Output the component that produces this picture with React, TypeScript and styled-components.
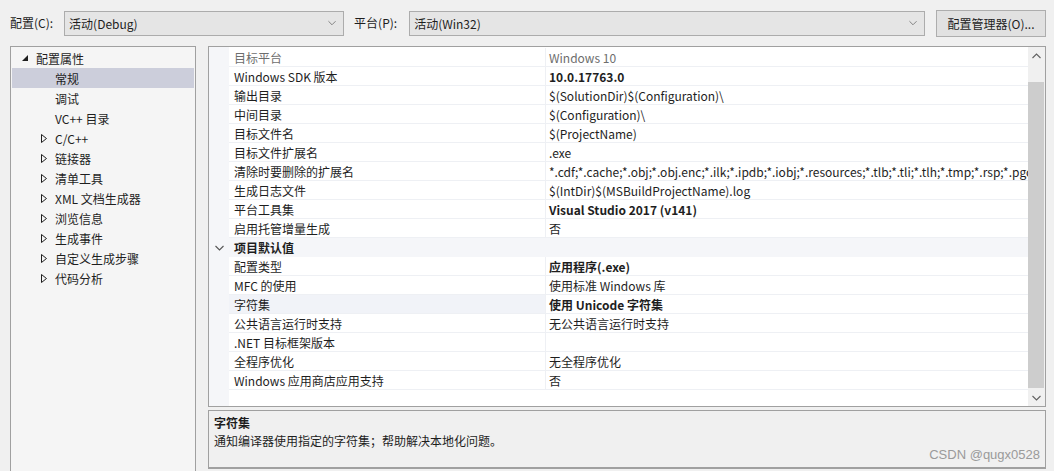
import React from "react";
import styled, { createGlobalStyle } from "styled-components";

const FONT = `"Segoe UI", "Noto Sans CJK SC", "Noto Sans", sans-serif`;

const Global = createGlobalStyle`
  html, body { margin: 0; padding: 0; background: #f0f0f0; }
  body { font-family: ${FONT}; font-size: 12px; color: #1e1e1e; }
  * { box-sizing: border-box; }
`;

const Window = styled.div`
  width: 1054px;
  height: 471px;
  display: flex;
  flex-direction: column;
  overflow: hidden;
  background: #f0f0f0;
  position: relative;
`;

const Toolbar = styled.div`
  height: 46px;
  display: flex;
  align-items: center;
  padding: 0 8px 0 10px;
  flex-shrink: 0;
`;

const Label = styled.span<{ $gap: number }>`
  margin-right: ${(p) => p.$gap}px;
  white-space: nowrap;
  line-height: 16px;
`;

const Combo = styled.div<{ $width?: number }>`
  ${(p) => (p.$width ? `width: ${p.$width}px; flex-shrink: 0;` : "flex: 1;")}
  height: 25px;
  border: 1px solid #acacac;
  background: #e5e5e5;
  display: flex;
  align-items: center;
  padding: 0 7px 0 4px;
  margin-right: 10px;
`;

const ComboText = styled.span`
  flex: 1;
  white-space: nowrap;
`;

const Button = styled.div`
  width: 110px;
  height: 27px;
  flex-shrink: 0;
  border: 1px solid #adadad;
  background: #e1e1e1;
  display: flex;
  align-items: center;
  justify-content: center;
  margin-left: 1px;
`;

const Main = styled.div`
  flex: 1;
  display: flex;
  padding-left: 10px;
  padding-right: 8px;
  gap: 12px;
  min-height: 0;
`;

const TreePanel = styled.div`
  width: 186px;
  flex-shrink: 0;
  height: 440px;
  border: 1px solid #a0a0a0;
  background: #f5f5f5;
  padding: 1px 1px 0 1px;
`;

const TreeRow = styled.div<{ $indent: number; $selected?: boolean }>`
  height: 20px;
  display: flex;
  align-items: center;
  padding-left: ${(p) => p.$indent}px;
  background: ${(p) => (p.$selected ? "#cccedb" : "transparent")};
  white-space: nowrap;
`;

const Twist = styled.span`
  width: 14px;
  display: inline-flex;
  align-items: center;
  flex-shrink: 0;
`;

const RightCol = styled.div`
  flex: 1;
  display: flex;
  flex-direction: column;
  gap: 3px;
  min-width: 0;
`;

const Grid = styled.div`
  height: 361px;
  flex-shrink: 0;
  border: 1px solid #a0a0a0;
  background: #ffffff;
  display: flex;
  overflow: hidden;
`;

const GridBody = styled.div`
  flex: 1;
  min-width: 0;
  padding-top: 1px;
  display: flex;
  flex-direction: column;
  background: linear-gradient(to right, #f5f6f9 20px, #ffffff 20px);
`;

const PropRow = styled.div`
  display: flex;
  height: 19px;
`;

const Gutter = styled.div`
  width: 20px;
  flex-shrink: 0;
  background: #f5f6f9;
  display: flex;
  align-items: center;
  justify-content: center;
`;

const NameCell = styled.div<{ $selected?: boolean; $dim?: boolean }>`
  width: 316px;
  flex-shrink: 0;
  padding-left: 5px;
  border-bottom: 1px solid #eef0f4;
  background: ${(p) => (p.$selected ? "#f1f3f8" : "#ffffff")};
  color: ${(p) => (p.$dim ? "#6d6d6d" : "#1e1e1e")};
  display: flex;
  align-items: center;
  white-space: nowrap;
`;

const ValueCell = styled.div<{ $bold?: boolean; $dim?: boolean }>`
  flex: 1;
  min-width: 0;
  border-left: 1px solid #eef0f4;
  border-bottom: 1px solid #eef0f4;
  padding-left: 3px;
  display: flex;
  align-items: center;
  white-space: nowrap;
  overflow: hidden;
  font-weight: ${(p) => (p.$bold ? 700 : 400)};
  color: ${(p) => (p.$dim ? "#6d6d6d" : "#1e1e1e")};
`;

const CategoryRow = styled.div`
  display: flex;
  height: 19px;
  background: #f5f6f9;
  align-items: center;
  font-weight: 700;
`;

const CategoryName = styled.div`
  padding-left: 5px;
  white-space: nowrap;
`;

const ScrollBar = styled.div`
  width: 17px;
  flex-shrink: 0;
  background: #f0f0f0;
  display: flex;
  flex-direction: column;
`;

const ScrollArrow = styled.div`
  height: 17px;
  display: flex;
  align-items: center;
  justify-content: center;
  flex-shrink: 0;
`;

const ScrollTrack = styled.div`
  flex: 1;
  display: flex;
  flex-direction: column;
  padding-top: 18px;
  padding-bottom: 1px;
`;

const Thumb = styled.div`
  flex: 1;
  background: #cdcdcd;
  margin: 0 1px 0 0;
`;

const Desc = styled.div`
  height: 59px;
  flex-shrink: 0;
  border: 1px solid #a0a0a0;
  border-bottom-width: 2px;
  background: #f0f0f0;
  padding: 3px 5px;
  line-height: 18px;
`;

const DescTitle = styled.div`
  font-weight: 700;
`;

const Watermark = styled.div`
  position: absolute;
  right: 14px;
  bottom: 9px;
  font-family: "Liberation Sans", Arial, sans-serif;
  font-size: 13px;
  color: #9a9a9a;
`;

const Chevron = ({ dir, color = "#606060", w = 9 }: { dir: "up" | "down"; color?: string; w?: number }) => (
  <svg width={w} height={6} viewBox="0 0 9 6">
    <polyline
      points={dir === "down" ? "0.5,1 4.5,5 8.5,1" : "0.5,5 4.5,1 8.5,5"}
      fill="none"
      stroke={color}
      strokeWidth="1.1"
    />
  </svg>
);

const Expanded = () => (
  <svg width="6" height="6" viewBox="0 0 6 6">
    <polygon points="6,0 6,6 0,6" fill="#1e1e1e" />
  </svg>
);

const Collapsed = () => (
  <svg width="6" height="9" viewBox="0 0 6 9">
    <polygon points="0.5,0.5 5.5,4.5 0.5,8.5" fill="none" stroke="#1e1e1e" strokeWidth="1" />
  </svg>
);

type Tree = { label: string; level: 0 | 1; kind: "open" | "closed" | "leaf"; selected?: boolean };

const tree: Tree[] = [
  { label: "配置属性", level: 0, kind: "open" },
  { label: "常规", level: 1, kind: "leaf", selected: true },
  { label: "调试", level: 1, kind: "leaf" },
  { label: "VC++ 目录", level: 1, kind: "leaf" },
  { label: "C/C++", level: 1, kind: "closed" },
  { label: "链接器", level: 1, kind: "closed" },
  { label: "清单工具", level: 1, kind: "closed" },
  { label: "XML 文档生成器", level: 1, kind: "closed" },
  { label: "浏览信息", level: 1, kind: "closed" },
  { label: "生成事件", level: 1, kind: "closed" },
  { label: "自定义生成步骤", level: 1, kind: "closed" },
  { label: "代码分析", level: 1, kind: "closed" },
];

type Prop = { name?: string; value?: string; bold?: boolean; dim?: boolean; selected?: boolean; category?: string };

const props: Prop[] = [
  { name: "目标平台", value: "Windows 10", dim: true },
  { name: "Windows SDK 版本", value: "10.0.17763.0", bold: true },
  { name: "输出目录", value: "$(SolutionDir)$(Configuration)\\" },
  { name: "中间目录", value: "$(Configuration)\\" },
  { name: "目标文件名", value: "$(ProjectName)" },
  { name: "目标文件扩展名", value: ".exe" },
  {
    name: "清除时要删除的扩展名",
    value:
      "*.cdf;*.cache;*.obj;*.obj.enc;*.ilk;*.ipdb;*.iobj;*.resources;*.tlb;*.tli;*.tlh;*.tmp;*.rsp;*.pgc;*.pgd;*.meta;*.tlog;*.manifest;*.res;*.pch;*.exp;*.idb;*.rep;*.xdc;*.pdb",
  },
  { name: "生成日志文件", value: "$(IntDir)$(MSBuildProjectName).log" },
  { name: "平台工具集", value: "Visual Studio 2017 (v141)", bold: true },
  { name: "启用托管增量生成", value: "否" },
  { category: "项目默认值" },
  { name: "配置类型", value: "应用程序(.exe)", bold: true },
  { name: "MFC 的使用", value: "使用标准 Windows 库" },
  { name: "字符集", value: "使用 Unicode 字符集", bold: true, selected: true },
  { name: "公共语言运行时支持", value: "无公共语言运行时支持" },
  { name: ".NET 目标框架版本", value: "" },
  { name: "全程序优化", value: "无全程序优化" },
  { name: "Windows 应用商店应用支持", value: "否" },
];

export default function App() {
  return (
    <Window>
      <Global />
      <Toolbar>
        <Label $gap={11}>配置(C):</Label>
        <Combo $width={280}>
          <ComboText>活动(Debug)</ComboText>
          <Chevron dir="down" color="#808080" w={8} />
        </Combo>
        <Label $gap={12}>平台(P):</Label>
        <Combo>
          <ComboText>活动(Win32)</ComboText>
          <Chevron dir="down" color="#808080" w={8} />
        </Combo>
        <Button>配置管理器(O)...</Button>
      </Toolbar>
      <Main>
        <TreePanel>
          {tree.map((t) => (
            <TreeRow key={t.label} $indent={t.level === 0 ? 10 : 29} $selected={t.selected}>
              <Twist>{t.kind === "open" ? <Expanded /> : t.kind === "closed" ? <Collapsed /> : null}</Twist>
              {t.label}
            </TreeRow>
          ))}
        </TreePanel>
        <RightCol>
          <Grid>
            <GridBody>
              {props.map((p, i) =>
                p.category ? (
                  <CategoryRow key={i}>
                    <Gutter>
                      <Chevron dir="down" color="#555" />
                    </Gutter>
                    <CategoryName>{p.category}</CategoryName>
                  </CategoryRow>
                ) : (
                  <PropRow key={i}>
                    <Gutter />
                    <NameCell $selected={p.selected} $dim={p.dim}>
                      {p.name}
                    </NameCell>
                    <ValueCell $bold={p.bold} $dim={p.dim}>
                      {p.value}
                    </ValueCell>
                  </PropRow>
                )
              )}
            </GridBody>
            <ScrollBar>
              <ScrollArrow>
                <Chevron dir="up" />
              </ScrollArrow>
              <ScrollTrack>
                <Thumb />
              </ScrollTrack>
              <ScrollArrow>
                <Chevron dir="down" />
              </ScrollArrow>
            </ScrollBar>
          </Grid>
          <Desc>
            <DescTitle>字符集</DescTitle>
            <div>通知编译器使用指定的字符集；帮助解决本地化问题。</div>
          </Desc>
        </RightCol>
      </Main>
      <Watermark>CSDN @qugx0528</Watermark>
    </Window>
  );
}
